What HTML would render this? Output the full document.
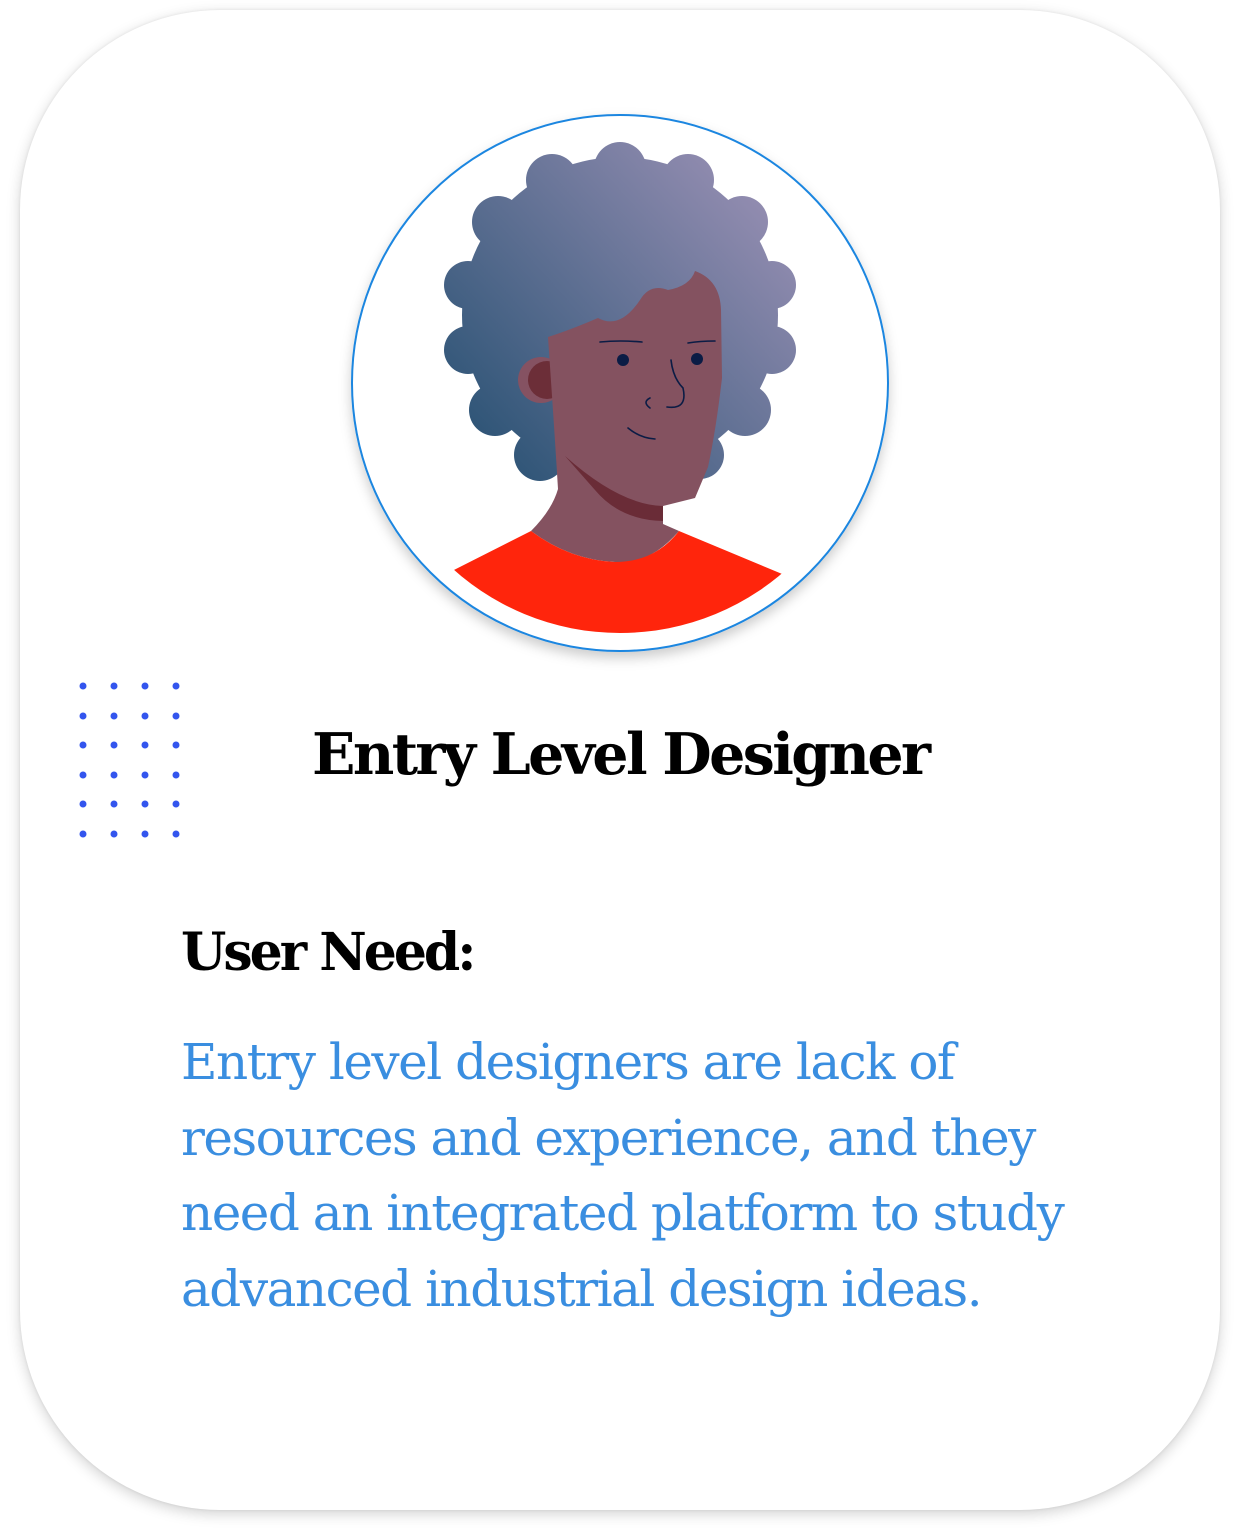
<!DOCTYPE html>
<html><head><meta charset="utf-8"><style>
html,body{margin:0;padding:0;background:#fff;width:1240px;height:1540px;overflow:hidden}
.card{position:absolute;left:20px;top:10px;width:1200px;height:1500px;border-radius:200px;background:#fff;box-shadow:0 4px 14px rgba(0,0,0,.18),0 0 3px rgba(0,0,0,.08)}
svg{position:absolute;left:0;top:0}
.t{position:absolute;font-family:"DejaVu Serif","Liberation Serif",serif;white-space:nowrap}
</style></head><body>
<div class="card"></div>
<svg width="1240" height="1540" viewBox="0 0 1240 1540">
<defs>
<linearGradient id="h" gradientUnits="userSpaceOnUse" x1="480" y1="440" x2="770" y2="180"><stop offset="0" stop-color="#2f5577"/><stop offset="1" stop-color="#978fb3"/></linearGradient>
<filter id="sh" x="-20%" y="-20%" width="140%" height="140%"><feDropShadow dx="0" dy="6" stdDeviation="6" flood-color="#000" flood-opacity=".2"/></filter>
<clipPath id="c"><circle cx="620" cy="383" r="250"/></clipPath>
</defs>
<circle cx="620" cy="383" r="268" fill="#fff" stroke="#1a86e0" stroke-width="2" filter="url(#sh)"/>
<g fill="url(#h)">
<circle cx="620" cy="315" r="158"/>
<circle cx="620" cy="168" r="26"/><circle cx="688" cy="180" r="26"/><circle cx="742" cy="222" r="26"/><circle cx="772" cy="285" r="24"/><circle cx="772" cy="350" r="24"/><circle cx="745" cy="410" r="26"/><circle cx="700" cy="455" r="24"/>
<circle cx="552" cy="180" r="26"/><circle cx="498" cy="222" r="26"/><circle cx="468" cy="285" r="24"/><circle cx="468" cy="350" r="24"/><circle cx="495" cy="410" r="26"/><circle cx="540" cy="455" r="26"/><circle cx="590" cy="468" r="20"/>
</g>
<circle cx="541" cy="380" r="23" fill="#855262"/>
<circle cx="547" cy="380" r="19" fill="#6c2e38"/>
<path d="M548 337 Q570 330 598 318 Q620 330 640 300 Q650 283 668 290 Q690 286 695 271 Q720 280 721 310 L722 378 Q716 430 708 467 L695 498 L663 506 L663 524 L679 531 Q650 565 615 562 Q570 560 531 531 Q552 510 558 489 Q555 440 552 396 Z" fill="#845260"/>
<path d="M565 456 Q620 505 663 506 L663 521 Q620 520 595 490 Z" fill="#6a2c37"/>
<path d="M446 574 L531 531 Q570 560 615 562 Q655 562 679 531 L787 576 L900 700 L340 700 Z" fill="#ff250c" clip-path="url(#c)"/>
<circle cx="623" cy="360" r="6" fill="#0b1c45"/><circle cx="697" cy="359" r="6" fill="#0b1c45"/>
<g fill="none" stroke="#0b1c45" stroke-width="1.6" stroke-linecap="round">
<path d="M600 342 Q620 340 642 342"/><path d="M688 343 Q700 341 715 341"/>
<path d="M671 360 Q673 378 683 388 Q688 410 667 407"/>
<path d="M650 398 Q642 402 650 408"/>
<path d="M628 428 Q640 438 655 439"/>
</g>
<g fill="#3355ee">
<circle cx="83" cy="686" r="3.5"/><circle cx="114" cy="686" r="3.5"/><circle cx="145" cy="686" r="3.5"/><circle cx="176" cy="686" r="3.5"/>
<circle cx="83" cy="716" r="3.5"/><circle cx="114" cy="716" r="3.5"/><circle cx="145" cy="716" r="3.5"/><circle cx="176" cy="716" r="3.5"/>
<circle cx="83" cy="745" r="3.5"/><circle cx="114" cy="745" r="3.5"/><circle cx="145" cy="745" r="3.5"/><circle cx="176" cy="745" r="3.5"/>
<circle cx="83" cy="775" r="3.5"/><circle cx="114" cy="775" r="3.5"/><circle cx="145" cy="775" r="3.5"/><circle cx="176" cy="775" r="3.5"/>
<circle cx="83" cy="804" r="3.5"/><circle cx="114" cy="804" r="3.5"/><circle cx="145" cy="804" r="3.5"/><circle cx="176" cy="804" r="3.5"/>
<circle cx="83" cy="834" r="3.5"/><circle cx="114" cy="834" r="3.5"/><circle cx="145" cy="834" r="3.5"/><circle cx="176" cy="834" r="3.5"/>
</g>
</svg>
<div class="t" style="left:312px;top:715px;font-size:57px;font-weight:bold;color:#000;letter-spacing:-2.6px;line-height:80px">Entry Level Designer</div>
<div class="t" style="left:181px;top:918px;font-size:52px;font-weight:bold;color:#000;letter-spacing:-3px;line-height:70px">User Need:</div>
<div class="t" style="left:181px;top:1025px;font-size:50px;color:#3a8ee0;line-height:75.5px;letter-spacing:-1.5px">Entry level designers are lack of<br>resources and experience, and they<br>need an integrated platform to study<br>advanced industrial design ideas.</div>
</body></html>
